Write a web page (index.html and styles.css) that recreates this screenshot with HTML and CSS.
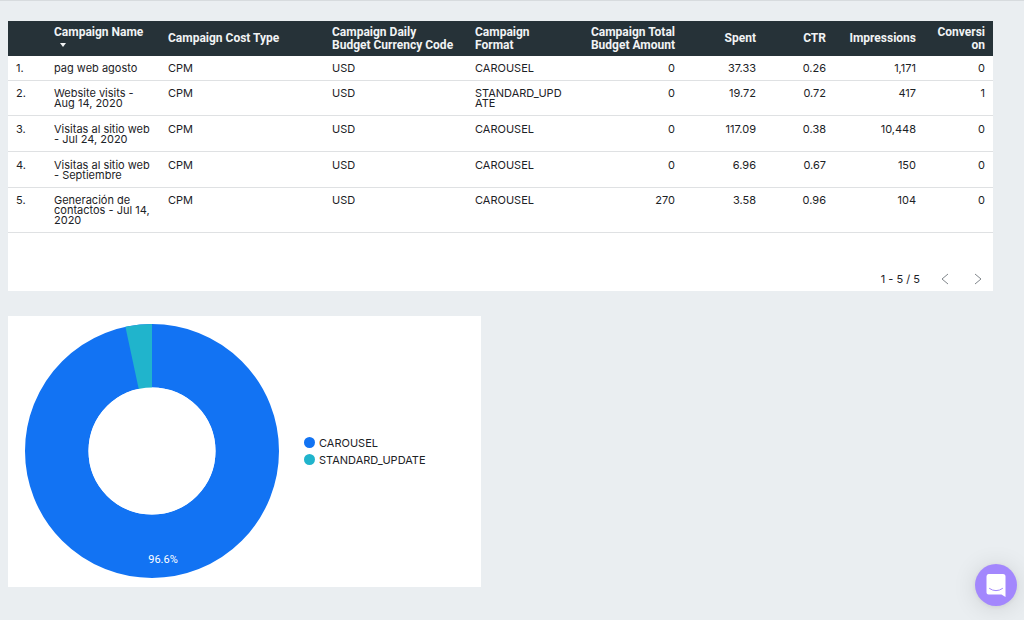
FILE: index.html
```html
<!DOCTYPE html>
<html lang="en">
<head>
<meta charset="utf-8">
<meta name="viewport" content="width=device-width, initial-scale=1">
<title>Campaign report</title>
<link rel="stylesheet" href="styles.css">
</head>
<body>
<main class="report">
  <section class="card table-card">
    <table class="campaigns">
      <colgroup>
        <col class="c-index"><col class="c-name"><col class="c-cost"><col class="c-currency"><col class="c-format">
        <col class="c-total"><col class="c-spent"><col class="c-ctr"><col class="c-impr"><col class="c-conv">
      </colgroup>
      <thead>
        <tr>
          <th></th>
          <th aria-sort="descending">Campaign Name<svg class="sort" viewBox="0 0 6 4" aria-hidden="true"><path d="M0 0h6L3 4z"/></svg></th>
          <th>Campaign Cost Type</th>
          <th>Campaign Daily<br>Budget Currency Code</th>
          <th>Campaign<br>Format</th>
          <th class="num">Campaign Total<br>Budget Amount</th>
          <th class="num">Spent</th>
          <th class="num">CTR</th>
          <th class="num">Impressions</th>
          <th class="num wrap">Conversion</th>
        </tr>
      </thead>
      <tbody>
        <tr><td>1.</td><td>pag web agosto</td><td>CPM</td><td>USD</td><td>CAROUSEL</td><td class="num">0</td><td class="num">37.33</td><td class="num">0.26</td><td class="num">1,171</td><td class="num">0</td></tr>
        <tr><td>2.</td><td>Website visits -<br>Aug 14, 2020</td><td>CPM</td><td>USD</td><td>STANDARD_UPD<wbr>ATE</td><td class="num">0</td><td class="num">19.72</td><td class="num">0.72</td><td class="num">417</td><td class="num">1</td></tr>
        <tr class="roomy"><td>3.</td><td>Visitas al sitio web<br>- Jul 24, 2020</td><td>CPM</td><td>USD</td><td>CAROUSEL</td><td class="num">0</td><td class="num">117.09</td><td class="num">0.38</td><td class="num">10,448</td><td class="num">0</td></tr>
        <tr class="roomy"><td>4.</td><td>Visitas al sitio web<br>- Septiembre</td><td>CPM</td><td>USD</td><td>CAROUSEL</td><td class="num">0</td><td class="num">6.96</td><td class="num">0.67</td><td class="num">150</td><td class="num">0</td></tr>
        <tr><td>5.</td><td>Generación de<br>contactos - Jul 14,<br>2020</td><td>CPM</td><td>USD</td><td>CAROUSEL</td><td class="num">270</td><td class="num">3.58</td><td class="num">0.96</td><td class="num">104</td><td class="num">0</td></tr>
      </tbody>
    </table>
    <nav class="pager" aria-label="Table pages">
      <span class="range">1 - 5 / 5</span>
      <button type="button" aria-label="Previous page"><svg viewBox="0 0 8 12"><path d="M7 1 1 6l6 5"/></svg></button>
      <button type="button" aria-label="Next page"><svg viewBox="0 0 8 12"><path d="M1 1l6 5-6 5"/></svg></button>
    </nav>
  </section>

  <section class="card chart-card">
    <svg class="donut" viewBox="0 0 254 254" role="img" aria-label="Share by campaign format">
      <circle class="ring" cx="127" cy="127" r="95.25"/>
      <path class="slice" d="M127 127 100.4 2.8A127 127 0 0 1 127 0z"/>
      <circle class="hole" cx="127" cy="127" r="63.5"/>
      <text x="138" y="239">96.6%</text>
    </svg>
    <ul class="legend">
      <li><span class="dot blue"></span>CAROUSEL</li>
      <li><span class="dot teal"></span>STANDARD_UPDATE</li>
    </ul>
  </section>
</main>

<button type="button" class="chat" aria-label="Open chat">
  <svg viewBox="0 0 20 24"><path class="bubble" d="M2.500 1h14.500q2.500 0 2.500 2.500V24l-4-2.500H2.500Q.5 21.500.5 19.500v-16Q.5 1 2.500 1z"/><path class="smile" d="M3.500 15.500q6.500 4.500 13 0"/></svg>
</button>
</body>
</html>
```

FILE: styles.css
```css
* { box-sizing: border-box; }

body {
  margin: 0;
  min-height: 100vh;
  border-top: 1px solid #d7dbde;
  background: #eaeef1;
  color: #1c2226;
  font: 11px/10px Inter, "Open Sans", sans-serif;
}

.report {
  display: flex;
  flex-direction: column;
  gap: 25px;
  padding: 20px 31px 32px 8px;
}

.card { background: #fff; }

/* Campaign table */
.campaigns {
  width: 100%;
  table-layout: fixed;
  border-collapse: separate;
  border-spacing: 0;
}
.c-index { width: 38px; }
.c-name { width: 114px; }
.c-cost { width: 164px; }
.c-currency { width: 143px; }
.c-format { width: 108px; }
.c-total { width: 108px; }
.c-spent { width: 81px; }
.c-ctr { width: 70px; }
.c-impr { width: 90px; }
.c-conv { width: 69px; }

.campaigns th {
  height: 35px;
  padding: 0 8px;
  background: #263238;
  color: #f1f3f4;
  font: 700 12px/13px Roboto, sans-serif;
  text-align: left;
  vertical-align: middle;
  white-space: nowrap;
}
.campaigns th.wrap {
  white-space: normal;
  word-break: break-all;
}
.sort {
  display: block;
  width: 6px;
  height: 4px;
  margin: 4px 0 4px 6px;
  fill: #f1f3f4;
}
.campaigns td {
  padding: 7px 8px;
  border-bottom: 1px solid #dfe1e3;
  vertical-align: top;
  white-space: nowrap;
}
.campaigns .roomy td { padding-top: 8px; }
.campaigns td:nth-child(5) { white-space: normal; }
.campaigns .num { text-align: right; }

.pager {
  display: flex;
  justify-content: flex-end;
  align-items: center;
  gap: 17px;
  padding: 38px 7px 4px;
}
.pager button {
  display: grid;
  place-items: center;
  width: 16px;
  height: 16px;
  padding: 0;
  border: 0;
  background: none;
}
.pager svg {
  width: 8px;
  height: 12px;
  fill: none;
  stroke: #80868b;
}

/* Format share */
.chart-card {
  display: flex;
  align-items: center;
  gap: 25px;
  width: 48%;
  min-width: 440px;
  padding: 8px 17px 9px;
}
.donut {
  flex: none;
  width: 254px;
  height: 254px;
}
.ring {
  fill: none;
  stroke: #1273f3;
  stroke-width: 63.5;
}
.slice { fill: #20b4cc; }
.hole { fill: #fff; }
.donut text {
  fill: #fff;
  font: 11px Roboto, sans-serif;
  text-anchor: middle;
}
.legend {
  margin: 0;
  padding: 0;
  list-style: none;
}
.legend li {
  display: flex;
  align-items: center;
  gap: 4px;
  height: 17px;
}
.dot {
  width: 11px;
  height: 11px;
  border-radius: 50%;
}
.blue { background: #1273f3; }
.teal { background: #20b4cc; }

/* Chat launcher */
.chat {
  position: fixed;
  right: 7px;
  bottom: 14px;
  display: grid;
  place-items: center;
  width: 42px;
  height: 42px;
  padding: 0;
  border: 0;
  border-radius: 50%;
  background: #a387fd;
  box-shadow: 0 1px 5px rgba(0, 0, 0, 0.08), 0 2px 24px rgba(0, 0, 0, 0.12);
}
.chat svg {
  width: 20px;
  height: 24px;
}
.bubble { fill: #fff; }
.smile {
  fill: none;
  stroke: #a387fd;
  stroke-linecap: round;
}
```
